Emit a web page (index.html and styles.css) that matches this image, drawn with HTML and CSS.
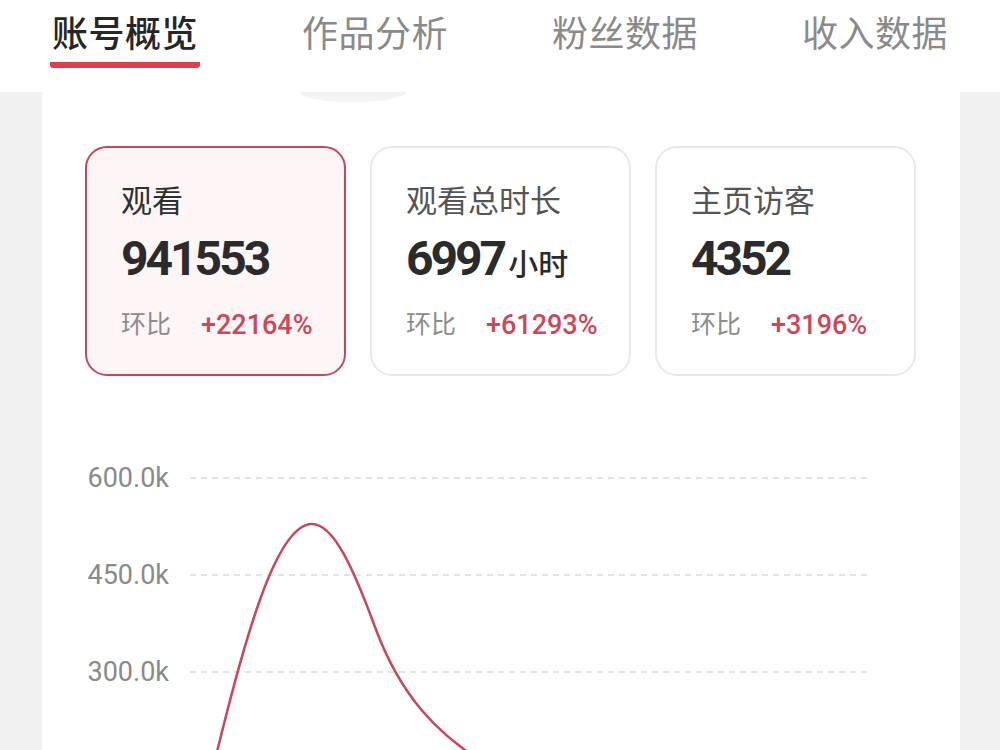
FILE: index.html
```html
<!DOCTYPE html>
<html lang="zh-CN">
<head>
  <meta charset="UTF-8">
  <meta name="viewport" content="width=device-width, initial-scale=1.0">
  <title>数据中心 | 账号概览</title>
  <link rel="stylesheet" href="styles.css">
</head>
<body>
  <div class="tabs">
    <div class="tab active">账号概览</div>
    <div class="tab">作品分析</div>
    <div class="tab">粉丝数据</div>
    <div class="tab">收入数据</div>
  </div>

  <div class="panel">
    <div class="pill"></div>

    <div class="cards">
      <div class="card selected">
        <div class="label">观看</div>
        <div class="value">941553</div>
        <div class="trend"><span class="hb">环比</span><span class="pct">+22164%</span></div>
      </div>
      <div class="card">
        <div class="label">观看总时长</div>
        <div class="value">6997<span class="unit">小时</span></div>
        <div class="trend"><span class="hb">环比</span><span class="pct">+61293%</span></div>
      </div>
      <div class="card">
        <div class="label">主页访客</div>
        <div class="value">4352</div>
        <div class="trend"><span class="hb">环比</span><span class="pct">+3196%</span></div>
      </div>
    </div>

    <svg class="chart" width="918" height="320" viewBox="0 0 918 320">
      <g class="grid">
        <line x1="148" y1="38" x2="828" y2="38"/>
        <line x1="148" y1="135" x2="828" y2="135"/>
        <line x1="148" y1="232" x2="828" y2="232"/>
      </g>
      <g class="axis">
        <text x="127" y="47">600.0k</text>
        <text x="127" y="144">450.0k</text>
        <text x="127" y="241">300.0k</text>
      </g>
      <path class="line" d="M168 340 C200 210 232 84 270 84 C292 84 312 130 333 187 C358 255 395 295 446 325 L474 340"/>
    </svg>
  </div>
</body>
</html>
```

FILE: styles.css
```css
body {
  margin: 0;
  background: #f1f1f1;
  font-family: Roboto, "Noto Sans CJK SC", sans-serif;
  color: #333;
}

.tabs {
  display: grid;
  grid-template-columns: repeat(4, 250px);
  height: 92px;
  background: #fff;
}
.tab {
  justify-self: center;
  width: 150px;
  height: 68px;
  padding-top: 12px;
  box-sizing: border-box;
  text-align: center;
  font-size: 36px;
  line-height: 46px;
  color: #8a8a8a;
  letter-spacing: 0.5px;
}
.tab.active {
  color: #262626;
  font-weight: 500;
  border-bottom: 6px solid #d9414f;
  border-radius: 0 0 3px 3px;
}

.panel {
  margin: 0 40px 0 42px;
  background: #fff;
  min-height: 658px;
  overflow: hidden;
}
.pill {
  width: 106px;
  height: 10px;
  margin-left: 258px;
  background: #f4f4f4;
  border-radius: 0 0 50px 50px / 0 0 10px 10px;
}

.cards {
  display: flex;
  gap: 24px;
  margin: 44px 0 0 43px;
}
.card {
  width: 261px;
  height: 230px;
  box-sizing: border-box;
  padding: 34px 0 0 34px;
  border: 2px solid #e9e9e9;
  border-radius: 22px;
  background: #fff;
}
.card.selected {
  border-color: #c9475a;
  background: #fdf5f6;
}
.label {
  font-size: 31px;
  line-height: 40px;
  color: #555;
}
.selected .label {
  color: #2f2f2f;
}
.value {
  margin-top: 9px;
  height: 56px;
  font-size: 48px;
  line-height: 56px;
  font-weight: 700;
  color: #2b2b2b;
  letter-spacing: -3px;
}
.unit {
  margin-left: 4px;
  font-size: 30px;
  line-height: 1;
  font-weight: 500;
  letter-spacing: 0;
}
.trend {
  margin-top: 22px;
  font-size: 25px;
  line-height: 32px;
  display: flex;
}
.hb {
  color: #8c8c8c;
  width: 80px;
}
.pct {
  color: #cf4658;
  font-size: 27px;
  font-weight: 500;
}

.chart {
  display: block;
  margin-top: 64px;
}
.grid line {
  stroke: #e2e2e2;
  stroke-width: 2;
  stroke-dasharray: 6 5;
}
.axis text {
  font-family: Roboto, sans-serif;
  font-size: 27px;
  fill: #8a8a8a;
  text-anchor: end;
}
.line {
  fill: none;
  stroke: #c8475a;
  stroke-width: 2.5;
}
```
